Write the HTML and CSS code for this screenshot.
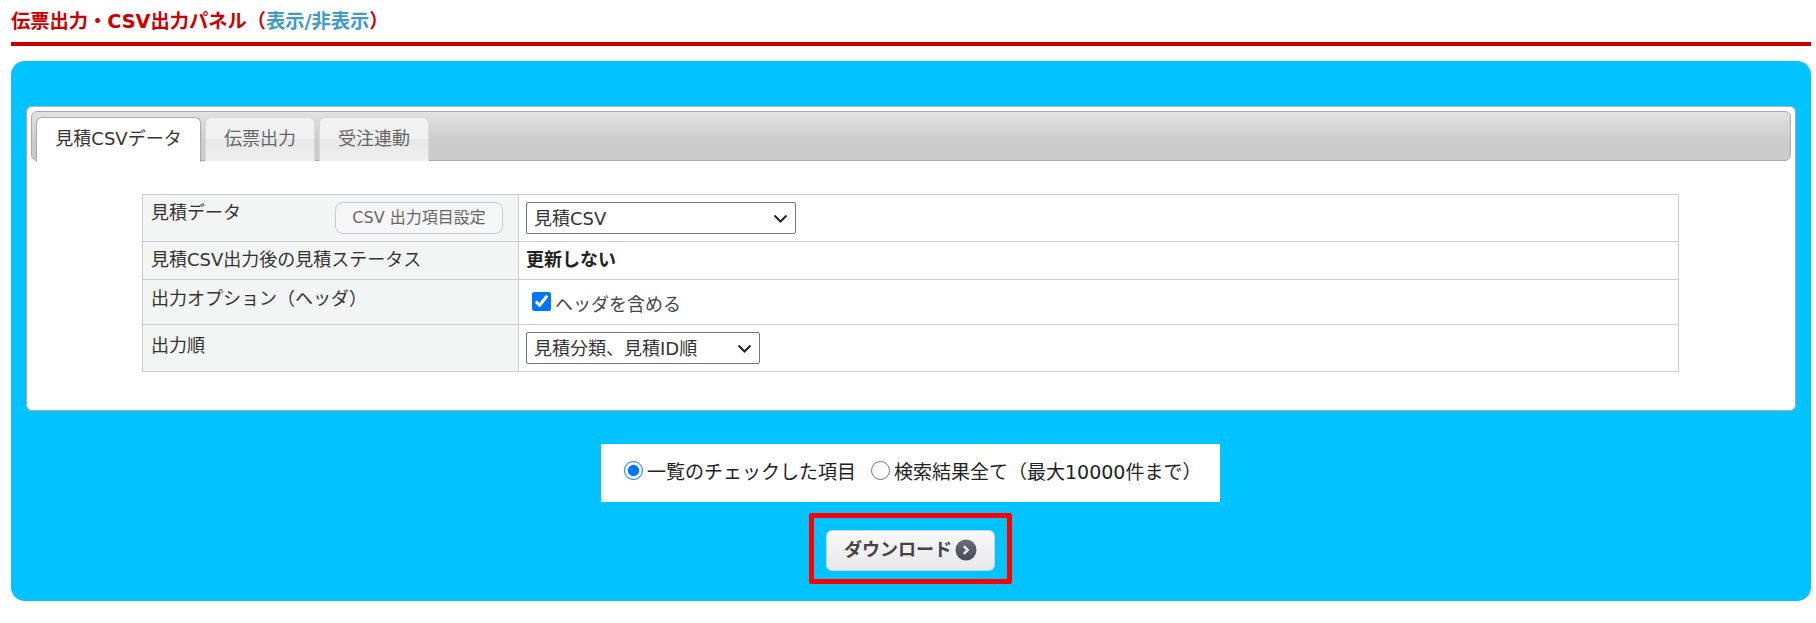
FILE: index.html
```html
<!DOCTYPE html>
<html lang="ja">
<head>
<meta charset="utf-8">
<title>伝票出力・CSV出力パネル</title>
<link rel="stylesheet" href="styles.css">
</head>
<body>
<h2 class="title">伝票出力・CSV出力パネル（<a class="toggle" href="#">表示/非表示</a>）</h2>
<section class="panel">
  <div class="card">
    <ul class="tabs">
      <li class="tab tab-first tab-active">見積CSVデータ</li>
      <li class="tab">伝票出力</li>
      <li class="tab">受注連動</li>
    </ul>
    <div class="tab-body">
      <table class="form">
        <tr class="row-a">
          <th>見積データ<button class="setting" type="button">CSV 出力項目設定</button></th>
          <td><select class="sel sel-wide"><option>見積CSV</option></select></td>
        </tr>
        <tr class="row-b">
          <th class="mid">見積CSV出力後の見積ステータス</th>
          <td class="mid"><strong>更新しない</strong></td>
        </tr>
        <tr class="row-c">
          <th>出力オプション（ヘッダ）</th>
          <td><label class="check"><input type="checkbox" checked>ヘッダを含める</label></td>
        </tr>
        <tr class="row-a row-d">
          <th>出力順</th>
          <td><select class="sel sel-narrow"><option>見積分類、見積ID順</option></select></td>
        </tr>
      </table>
    </div>
  </div>
  <div class="actions">
    <div class="scope">
      <label class="opt"><input type="radio" name="scope" checked>一覧のチェックした項目</label>
      <label class="opt"><input type="radio" name="scope">検索結果全て（最大10000件まで）</label>
    </div>
    <div class="highlight">
      <button class="download" type="button">ダウンロード
        <svg class="go" width="22" height="22" viewBox="0 0 18 18" aria-hidden="true">
          <defs><linearGradient id="g" x1="0" y1="0" x2="0" y2="1"><stop offset="0" stop-color="#6c6c78"/><stop offset="1" stop-color="#4a4a58"/></linearGradient></defs>
          <circle cx="9" cy="9" r="8.6" fill="url(#g)"/>
          <path d="M7.2 5.8 10.4 9 7.2 12.2" fill="none" stroke="#e8e8e8" stroke-width="2"/>
        </svg>
      </button>
    </div>
  </div>
</section>
</body>
</html>
```
FILE: styles.css
```css
* { box-sizing: border-box; }
html, body { margin: 0; padding: 0; background: #fff; }
body {
  font-family: "DejaVu Sans", "Noto Sans CJK JP", sans-serif;
  font-size: 18px;
  line-height: 24px;
  color: #333;
  padding: 0 5px 0 11px;
}
.title {
  margin: 0 0 15px;
  height: 46px;
  padding-top: 10px;
  font-size: 19.25px;
  line-height: 24px;
  font-weight: 700;
  color: #cc0000;
  border-bottom: 4px solid #cc0000;
}
.toggle { color: #3e9bc6; text-decoration: none; }
.panel {
  height: 540px;
  background: #00c3ff;
  border-radius: 14px;
  padding: 45px 15px 0;
}
.card {
  height: 305px;
  background: #fff;
  border: 1px solid #aaa;
  border-top-color: #b4b4b4;
  border-radius: 6px;
  padding: 4px;
}
.tabs {
  display: flex;
  gap: 4px;
  list-style: none;
  margin: 0;
  height: 50px;
  padding: 5px 0 0 4px;
  background: linear-gradient(#e2e2e2, #cbcbcb 62%, #cbcbcb);
  border: 1px solid #aaa;
  border-radius: 6px;
}
.tab {
  width: 110px;
  height: 44px;
  line-height: 42px;
  text-align: center;
  color: #666;
  border: 1px solid #d8d8d8;
  border-bottom: 0;
  border-radius: 6px 6px 0 0;
  background: linear-gradient(#f1f1f1 50%, #e8e8e8 50%, #efefef);
}
.tab-first { width: 165px; }
.tab-active {
  color: #333;
  background: #fff;
  border-color: #aaa;
  height: 45px;
}
.tab-body { padding: 33px 0 0 111px; }
.form {
  width: 1537px;
  border-collapse: collapse;
  border: 1px solid #ccc;
}
.form th, .form td {
  border: 1px solid #ccc;
  padding: 6px 7px 5px 8px;
  vertical-align: top;
  text-align: left;
  font-weight: 400;
}
.form th { width: 376px; background: #f3f4f4; color: #333; }
.form td { background: #fff; padding-left: 7px; }
.form .mid { vertical-align: middle; padding-top: 4px; padding-bottom: 5px; }
.form td strong { font-weight: 700; color: #222; }
.row-a { height: 47px; }
.row-b { height: 38px; }
.row-c { height: 45px; }
.form .row-a td { padding-top: 7px; }
.form .row-c th { padding-top: 7px; }
.form .row-d th { padding-top: 9px; }
.setting {
  float: right;
  width: 168px;
  height: 32px;
  margin: 1px 8px 0 0;
  padding: 0;
  font: 16px/30px "DejaVu Sans", "Noto Sans CJK JP", sans-serif;
  color: #666;
  background: #f6f6f6;
  border: 1px solid #c8c8d4;
  border-radius: 8px;
}
.sel {
  display: block;
  height: 32px;
  font: 18px "DejaVu Sans", "Noto Sans CJK JP", sans-serif;
  color: #333;
  appearance: none;
  background: #fff url("data:image/svg+xml,%3Csvg xmlns='http://www.w3.org/2000/svg' width='15' height='9' viewBox='0 0 15 9'%3E%3Cpath d='M1.5 1.5 7.5 7.5l6-6' fill='none' stroke='%23222' stroke-width='2'/%3E%3C/svg%3E") no-repeat right 7px center;
  border: 1px solid #767676;
  border-radius: 2px;
  padding: 0 24px 0 7px;
}
.sel-wide { width: 270px; }
.sel-narrow { width: 234px; }
.check {
  display: flex;
  align-items: center;
  gap: 4px;
  padding: 7px 0 0 6px;
  color: #444;
}
.check input { width: 19px; height: 19px; margin: -8px 0 0; }
.actions {
  display: flex;
  flex-direction: column;
  align-items: center;
  padding: 33px 1px 0 0;
}
.scope {
  width: 619px;
  height: 58px;
  padding: 0 0 2px 23px;
  display: flex;
  align-items: center;
  gap: 15px;
  font-size: 19px;
  background: #fff;
  color: #222;
}
.opt { display: flex; align-items: center; gap: 4px; white-space: nowrap; }
.opt input { width: 19px; height: 19px; margin: -4px 0 0; }
.highlight {
  display: flex;
  justify-content: center;
  width: 203px;
  height: 71px;
  margin-top: 11px;
  padding-top: 12px;
  border: 5px solid #ff0000;
  border-radius: 2px;
}
.download {
  display: flex;
  align-items: center;
  justify-content: center;
  gap: 3px;
  width: 169px;
  height: 41px;
  padding: 0 0 2px;
  font: 700 18px/24px "DejaVu Sans", "Noto Sans CJK JP", sans-serif;
  color: #444;
  background: linear-gradient(#f8f8f8, #e8e8e8);
  border: 1px solid #c4d4dc;
  border-radius: 6px;
}
.go { display: block; }
```
